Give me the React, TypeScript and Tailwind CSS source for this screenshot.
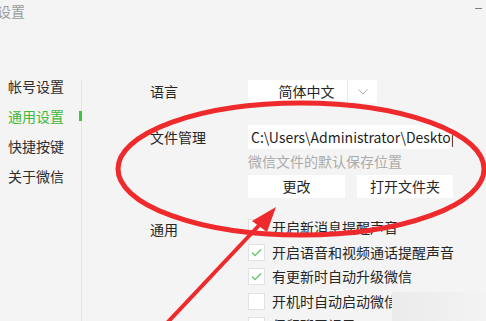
import React from 'react';

// WeChat-style settings window with a red hand-drawn annotation on top.

const NAV = ['帐号设置', '通用设置', '快捷按键', '关于微信'];
const ACTIVE = 1;

const OPTIONS: { label: string; checked: boolean }[] = [
  { label: '开启新消息提醒声音', checked: false },
  { label: '开启语音和视频通话提醒声音', checked: true },
  { label: '有更新时自动升级微信', checked: true },
  { label: '开机时自动启动微信', checked: false },
  { label: '保留聊天记录', checked: false },
];

function CheckBox({ checked }: { checked: boolean }) {
  return (
    <span className="flex items-center justify-center w-[17px] h-[17px] shrink-0 bg-white border border-[#e2e2e2]">
      {checked && (
        <svg width="11" height="9" viewBox="0 0 11 9" fill="none">
          <polyline points="1,4.5 4,7.5 10,1.5" stroke="#6cc46c" strokeWidth="1.3" />
        </svg>
      )}
    </span>
  );
}

export default function App() {
  return (
    <div className="relative w-[486px] h-[321px] overflow-hidden bg-[#f4f4f4] font-['Noto_Sans_CJK_SC',sans-serif] text-[#262626]">
      {/* title bar */}
      <div className="flex justify-between h-[23px] pr-[4px]">
        <span className="ml-[-3px] text-[14px] leading-[23px] text-[#9b9b9b]">设置</span>
        <span className="block w-[7px] h-px mt-[8px] bg-[#7d7d7d]" />
      </div>

      <div className="flex mt-[48px]">
        {/* sidebar */}
        <div className="w-[81px] shrink-0">
          {NAV.map((n, i) => (
            <div
              key={n}
              className={
                'relative h-[30px] pl-[8px] text-[14px] leading-[30px] ' +
                (i === ACTIVE ? 'text-[#3cb83c]' : 'text-[#2e2e2e]')
              }
            >
              {n}
              {i === ACTIVE && (
                <span className="absolute top-[10px] right-[-1px] z-10 w-[3px] h-[10px] bg-[#3cc83c]" />
              )}
            </div>
          ))}
        </div>
        <div className="w-px mt-[9px] h-[300px] bg-[#e3e3e3]" />

        {/* content */}
        <div className="flex-1 pl-[68px] pt-[9px] text-[14px]">
          <div className="flex items-center h-[23px]">
            <span className="w-[98px]">语言</span>
            <div className="flex w-[129px] h-[23px] bg-white">
              <span className="w-[99px] pl-[18px] text-center leading-[23px]">简体中文</span>
              <span className="flex flex-1 items-center justify-center border-l border-[#e8e8e8]">
                <svg width="10" height="6" viewBox="0 0 10 6" fill="none">
                  <polyline points="0.5,0.5 5,5 9.5,0.5" stroke="#b5b5b5" strokeWidth="1" />
                </svg>
              </span>
            </div>
          </div>

          <div className="flex mt-[22px]">
            <span className="w-[98px] h-[24px] leading-[24px]">文件管理</span>
            <div>
              <div className="w-[205px] h-[24px] pl-[3px] bg-white overflow-hidden whitespace-nowrap text-[14px] leading-[24px] text-[#1f1f1f]">
                C:\Users\Administrator\Desktop\WeChat Files
              </div>
              <div className="mt-[2px] leading-[20px] text-[#ababab]">微信文件的默认保存位置</div>
              <div className="flex gap-[12px] mt-[4px]">
                <button className="w-[97px] h-[23px] bg-white leading-[23px] text-[#262626]">更改</button>
                <button className="w-[96px] h-[23px] bg-white leading-[23px] text-[#262626]">打开文件夹</button>
              </div>
            </div>
          </div>

          <div className="flex mt-[21px]">
            <span className="w-[98px] mt-[2px] leading-[17px]">通用</span>
            <div className="flex flex-col gap-[7.5px]">
              {OPTIONS.map((o) => (
                <div key={o.label} className="flex items-center gap-[7px] h-[17px]">
                  <CheckBox checked={o.checked} />
                  <span className="leading-[17px] whitespace-nowrap">{o.label}</span>
                </div>
              ))}
            </div>
          </div>
        </div>
      </div>

      {/* faint box in the lower right corner */}
      <div className="absolute left-[392px] top-[292px] w-[94px] h-[29px] bg-linear-to-r from-[#ebebeb] to-[#f3f3f3]" />

      {/* red annotation */}
      <svg className="absolute inset-0 pointer-events-none" width="486" height="321" viewBox="0 0 486 321" fill="none">
        <ellipse cx="301" cy="169" rx="183" ry="66" stroke="#ef2a2c" strokeWidth="5" />
        <line x1="167" y1="323" x2="265" y2="219" stroke="#ef2a2c" strokeWidth="4" strokeLinecap="round" />
        <polygon points="276,207 252,221 267,232" fill="#ef2a2c" />
      </svg>
    </div>
  );
}
